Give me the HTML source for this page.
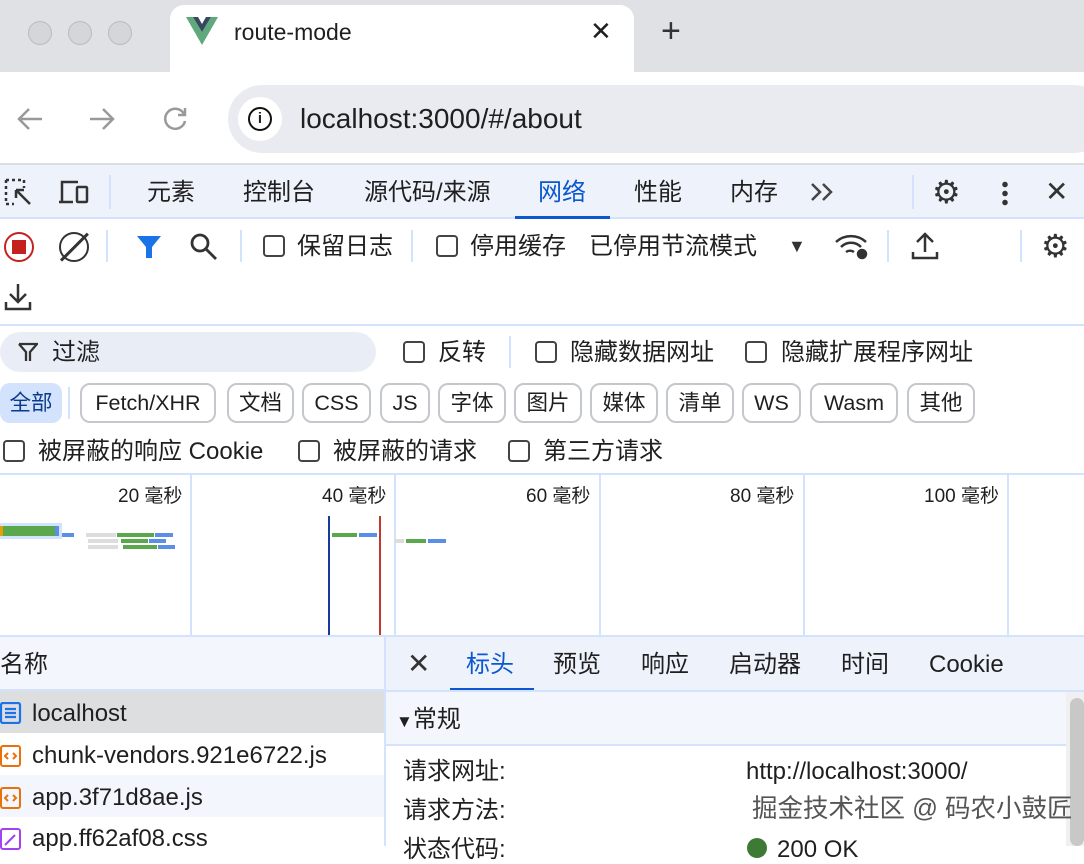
<!DOCTYPE html>
<html><head><meta charset="utf-8"><style>
*{margin:0;padding:0;box-sizing:border-box}
body{width:1084px;height:846px;overflow:hidden;position:relative;background:#fff;font-family:"Liberation Sans","Noto Sans CJK SC",sans-serif;color:#1f1f1f}
.a{position:absolute;white-space:nowrap}
.t{font-size:24px;line-height:28px}
.cb{position:absolute;width:22px;height:22px;border:2px solid #444;border-radius:4px;background:#fff}
.chip{position:absolute;top:383px;height:40px;border:2px solid #c4c7cc;border-radius:10px;font-size:21.5px;line-height:36px;text-align:center;color:#1f1f1f}
.vl{position:absolute;width:2px;background:#d3e3fd}
.tl{font-size:19px;line-height:22px}
</style></head><body>
<!-- tab strip -->
<div class="a" style="left:0;top:0;width:1084px;height:72px;background:#dfe1e5"></div>
<div class="a" style="left:28px;top:21px;width:24px;height:24px;border-radius:50%;background:#d5d6d8;border:1px solid #bbb"></div>
<div class="a" style="left:68px;top:21px;width:24px;height:24px;border-radius:50%;background:#d5d6d8;border:1px solid #bbb"></div>
<div class="a" style="left:108px;top:21px;width:24px;height:24px;border-radius:50%;background:#d5d6d8;border:1px solid #bbb"></div>
<div class="a" style="left:170px;top:5px;width:464px;height:72px;background:#fff;border-radius:14px 14px 0 0"></div>
<svg class="a" style="left:186px;top:17px" width="32" height="28" viewBox="0 0 32 28"><path d="M0 0h7l9 15 9-15h7L16 28z" fill="#5fa97c"/><path d="M7 0h5l4 7 4-7h5L16 15z" fill="#34495e"/></svg>
<div class="a" style="left:234px;top:17px;font-size:23px;line-height:30px">route-mode</div>
<div class="a" style="left:590px;top:16px;font-size:26px;line-height:30px">✕</div>
<div class="a" style="left:661px;top:12px;font-size:34px;line-height:38px;color:#333">+</div>
<!-- toolbar -->
<div class="a" style="left:0;top:72px;width:1084px;height:92px;background:#fff"></div>
<svg class="a" style="left:16px;top:106px" width="28" height="26" viewBox="0 0 28 26" fill="none" stroke="#999" stroke-width="2.5"><path d="M26 13H3M13 3L3 13l10 10"/></svg>
<svg class="a" style="left:88px;top:106px" width="28" height="26" viewBox="0 0 28 26" fill="none" stroke="#999" stroke-width="2.5"><path d="M2 13h23M15 3l10 10-10 10"/></svg>
<svg class="a" style="left:161px;top:105px" width="28" height="28" viewBox="0 0 28 28" fill="none" stroke="#999" stroke-width="2.5"><path d="M23 9A10 10 0 1 0 24 16"/><path d="M24 3v7h-7" /></svg>
<div class="a" style="left:228px;top:85px;width:880px;height:68px;background:#e9ebf0;border-radius:34px"></div>
<div class="a" style="left:238px;top:97px;width:44px;height:44px;border-radius:50%;background:#fff"></div>
<div class="a" style="left:248px;top:107px;width:24px;height:24px;border-radius:50%;border:2.5px solid #111;font-size:15px;line-height:19px;text-align:center;font-weight:bold">i</div>
<div class="a" style="left:300px;top:102px;font-size:28px;line-height:34px">localhost:3000/#/about</div>
<div class="a" style="left:0;top:163px;width:1084px;height:2px;background:#ddd"></div>
<!-- devtools tabs -->
<div class="a" style="left:0;top:165px;width:1084px;height:53px;background:#eef2fb"></div>
<div class="a" style="left:0;top:217px;width:1084px;height:2px;background:#d3e3fd"></div>
<svg class="a" style="left:4px;top:178px" width="30" height="30" viewBox="0 0 30 30" fill="none" stroke="#333" stroke-width="2.5"><path d="M2 2h18M2 2v24M2 26h8M20 2v8" stroke-dasharray="3 3"/><path d="M12 12l14 14M12 12h8M12 12v8"/></svg>
<svg class="a" style="left:58px;top:179px" width="32" height="26" viewBox="0 0 32 26" fill="none" stroke="#333" stroke-width="2.5"><path d="M4 22V3h16M1 23h14"/><rect x="19" y="8" width="10" height="15" rx="1"/></svg>
<div class="vl" style="left:109px;top:175px;height:34px"></div>
<div class="a t" style="left:147px;top:179px">元素</div>
<div class="a t" style="left:243px;top:179px">控制台</div>
<div class="a t" style="left:364px;top:179px">源代码/来源</div>
<div class="a t" style="left:538px;top:179px;color:#0b57d0">网络</div>
<div class="a" style="left:515px;top:216px;width:95px;height:3px;background:#0b57d0"></div>
<div class="a t" style="left:634px;top:179px">性能</div>
<div class="a t" style="left:730px;top:179px">内存</div>
<svg class="a" style="left:810px;top:182px" width="26" height="20" viewBox="0 0 26 20" fill="none" stroke="#444" stroke-width="2.5"><path d="M2 2l8 8-8 8M13 2l8 8-8 8"/></svg>
<div class="vl" style="left:912px;top:175px;height:34px"></div>
<div class="a" style="left:932px;top:174px;font-size:32px;line-height:36px;color:#333">⚙</div>
<div class="a" style="left:1002px;top:180px;width:6px;height:26px;background:radial-gradient(circle,#333 2.5px,transparent 3px) 0 0/6px 9px"></div>
<div class="a" style="left:1045px;top:176px;font-size:28px;line-height:32px;color:#333">✕</div>
<!-- network toolbar -->
<div class="a" style="left:4px;top:232px;width:30px;height:30px;border-radius:50%;border:2.5px solid #c5221f"></div>
<div class="a" style="left:12px;top:240px;width:14px;height:14px;background:#c5221f"></div>
<div class="a" style="left:59px;top:232px;width:30px;height:30px;border-radius:50%;border:2.5px solid #333"></div>
<div class="a" style="left:73px;top:228px;width:2.5px;height:38px;background:#333;transform:rotate(45deg)"></div>
<div class="vl" style="left:106px;top:230px;height:32px"></div>
<svg class="a" style="left:136px;top:234px" width="26" height="26" viewBox="0 0 26 26"><path d="M1 2h24L16 13v11h-6V13z" fill="#1a73e8"/></svg>
<svg class="a" style="left:189px;top:232px" width="30" height="30" viewBox="0 0 30 30" fill="none" stroke="#333" stroke-width="2.8"><circle cx="11" cy="11" r="8"/><path d="M17 17l10 10"/></svg>
<div class="vl" style="left:240px;top:230px;height:32px"></div>
<div class="cb" style="left:263px;top:235px"></div>
<div class="a t" style="left:297px;top:233px">保留日志</div>
<div class="vl" style="left:411px;top:230px;height:32px"></div>
<div class="cb" style="left:436px;top:235px"></div>
<div class="a t" style="left:470px;top:233px">停用缓存</div>
<div class="a t" style="left:589px;top:233px">已停用节流模式</div>
<div class="a" style="left:788px;top:236px;font-size:18px;color:#333">▼</div>
<svg class="a" style="left:834px;top:232px" width="36" height="28" viewBox="0 0 36 28" fill="none" stroke="#333" stroke-width="2.5"><path d="M2 10a22 22 0 0 1 30 0M7 15a14 14 0 0 1 20 0M12 20a7 7 0 0 1 8 0"/><circle cx="28" cy="22" r="4" fill="#333"/></svg>
<div class="vl" style="left:887px;top:230px;height:32px"></div>
<svg class="a" style="left:911px;top:232px" width="28" height="28" viewBox="0 0 28 28" fill="none" stroke="#333" stroke-width="2.5"><path d="M14 20V3M6 10l8-8 8 8M2 20v6h24v-6"/></svg>
<div class="vl" style="left:1020px;top:230px;height:32px"></div>
<div class="a" style="left:1041px;top:228px;font-size:32px;line-height:36px;color:#333">⚙</div>
<svg class="a" style="left:4px;top:282px" width="28" height="30" viewBox="0 0 28 30" fill="none" stroke="#333" stroke-width="2.5"><path d="M14 2v18M6 12l8 8 8-8M2 20v7h24v-7"/></svg>
<div class="a" style="left:0;top:324px;width:1084px;height:2px;background:#d3e3fd"></div>
<!-- filter row -->
<div class="a" style="left:0;top:332px;width:376px;height:40px;background:#e9eef6;border-radius:20px"></div>
<svg class="a" style="left:18px;top:342px" width="20" height="20" viewBox="0 0 20 20" fill="none" stroke="#333" stroke-width="2.3"><path d="M1 2h18l-7 8v9M8 19v-9L1 2"/></svg>
<div class="a t" style="left:52px;top:339px">过滤</div>
<div class="cb" style="left:403px;top:341px"></div>
<div class="a t" style="left:438px;top:339px">反转</div>
<div class="vl" style="left:509px;top:336px;height:32px"></div>
<div class="cb" style="left:535px;top:341px"></div>
<div class="a t" style="left:570px;top:339px">隐藏数据网址</div>
<div class="cb" style="left:745px;top:341px"></div>
<div class="a t" style="left:781px;top:339px">隐藏扩展程序网址</div>
<!-- chips -->
<div class="a" style="left:0;top:383px;width:62px;height:40px;background:#d3e3fd;border-radius:10px;font-size:21.5px;line-height:40px;text-align:center;color:#0b3a8c">全部</div>
<div class="vl" style="left:68px;top:387px;height:32px"></div>
<div class="chip" style="left:80px;width:136px">Fetch/XHR</div>
<div class="chip" style="left:227px;width:67px">文档</div>
<div class="chip" style="left:302px;width:69px">CSS</div>
<div class="chip" style="left:380px;width:50px">JS</div>
<div class="chip" style="left:438px;width:68px">字体</div>
<div class="chip" style="left:514px;width:68px">图片</div>
<div class="chip" style="left:590px;width:68px">媒体</div>
<div class="chip" style="left:666px;width:68px">清单</div>
<div class="chip" style="left:742px;width:59px">WS</div>
<div class="chip" style="left:810px;width:88px">Wasm</div>
<div class="chip" style="left:907px;width:68px">其他</div>
<div class="cb" style="left:3px;top:440px"></div>
<div class="a t" style="left:38px;top:438px">被屏蔽的响应 Cookie</div>
<div class="cb" style="left:298px;top:440px"></div>
<div class="a t" style="left:333px;top:438px">被屏蔽的请求</div>
<div class="cb" style="left:508px;top:440px"></div>
<div class="a t" style="left:543px;top:438px">第三方请求</div>
<div class="a" style="left:0;top:473px;width:1084px;height:2px;background:#d3e3fd"></div>
<!-- timeline -->
<div class="vl" style="left:190px;top:475px;height:161px"></div>
<div class="vl" style="left:394px;top:475px;height:161px"></div>
<div class="vl" style="left:599px;top:475px;height:161px"></div>
<div class="vl" style="left:803px;top:475px;height:161px"></div>
<div class="vl" style="left:1007px;top:475px;height:161px"></div>
<div class="a tl" style="left:118px;top:486px">20 毫秒</div>
<div class="a tl" style="left:322px;top:486px">40 毫秒</div>
<div class="a tl" style="left:526px;top:486px">60 毫秒</div>
<div class="a tl" style="left:730px;top:486px">80 毫秒</div>
<div class="a tl" style="left:924px;top:486px">100 毫秒</div>
<div class="a" style="left:0;top:523px;width:62px;height:16px;background:#d3e3fd"></div>
<div class="a" style="left:0;top:526px;width:3px;height:10px;background:#e3a008"></div>
<div class="a" style="left:3px;top:526px;width:52px;height:10px;background:#5ba84c"></div>
<div class="a" style="left:55px;top:526px;width:4px;height:10px;background:#5b8ee6"></div>
<div class="a" style="left:62px;top:533px;width:12px;height:4px;background:#5b8ee6"></div>
<div class="a" style="left:86px;top:533px;width:30px;height:4px;background:#ddd"></div>
<div class="a" style="left:117px;top:533px;width:37px;height:4px;background:#5ba84c"></div>
<div class="a" style="left:155px;top:533px;width:18px;height:4px;background:#5b8ee6"></div>
<div class="a" style="left:88px;top:539px;width:30px;height:4px;background:#ddd"></div>
<div class="a" style="left:121px;top:539px;width:27px;height:4px;background:#5ba84c"></div>
<div class="a" style="left:149px;top:539px;width:17px;height:4px;background:#5b8ee6"></div>
<div class="a" style="left:88px;top:545px;width:30px;height:4px;background:#ddd"></div>
<div class="a" style="left:123px;top:545px;width:34px;height:4px;background:#5ba84c"></div>
<div class="a" style="left:158px;top:545px;width:17px;height:4px;background:#5b8ee6"></div>
<div class="a" style="left:328px;top:516px;width:2px;height:120px;background:#1a3a9a"></div>
<div class="a" style="left:379px;top:516px;width:2px;height:120px;background:#c0392b"></div>
<div class="a" style="left:332px;top:533px;width:25px;height:4px;background:#5ba84c"></div>
<div class="a" style="left:359px;top:533px;width:18px;height:4px;background:#5b8ee6"></div>
<div class="a" style="left:394px;top:539px;width:10px;height:4px;background:#ddd"></div>
<div class="a" style="left:406px;top:539px;width:20px;height:4px;background:#5ba84c"></div>
<div class="a" style="left:428px;top:539px;width:18px;height:4px;background:#5b8ee6"></div>
<div class="a" style="left:0;top:635px;width:1084px;height:2px;background:#d3e3fd"></div>
<!-- left list -->
<div class="a" style="left:0;top:637px;width:384px;height:53px;background:#f3f6fc"></div>
<div class="a t" style="left:0;top:651px">名称</div>
<div class="a" style="left:0;top:689px;width:384px;height:2px;background:#d3e3fd"></div>
<div class="a" style="left:0;top:691px;width:384px;height:42px;background:#dcdedf"></div>
<div class="a" style="left:0;top:775px;width:384px;height:42px;background:#f3f6fc"></div>
<svg class="a" style="left:0;top:702px" width="22" height="22" viewBox="0 0 22 22" fill="none" stroke="#1a73e8" stroke-width="2.2"><rect x="1" y="1" width="19" height="20" rx="2"/><path d="M5 7h11M5 11h11M5 15h11"/></svg>
<div class="a t" style="left:32px;top:700px">localhost</div>
<svg class="a" style="left:0;top:745px" width="22" height="22" viewBox="0 0 22 22" fill="none" stroke="#e8710a" stroke-width="2"><rect x="1" y="1" width="19" height="20" rx="2"/><path d="M8 8l-3 3 3 3M13 8l3 3-3 3"/></svg>
<div class="a t" style="left:32px;top:742px">chunk-vendors.921e6722.js</div>
<svg class="a" style="left:0;top:787px" width="22" height="22" viewBox="0 0 22 22" fill="none" stroke="#e8710a" stroke-width="2"><rect x="1" y="1" width="19" height="20" rx="2"/><path d="M8 8l-3 3 3 3M13 8l3 3-3 3"/></svg>
<div class="a t" style="left:32px;top:784px">app.3f71d8ae.js</div>
<svg class="a" style="left:0;top:828px" width="22" height="22" viewBox="0 0 22 22" fill="none" stroke="#a142f4" stroke-width="2"><rect x="1" y="1" width="19" height="20" rx="2"/><path d="M5 17l10-10"/></svg>
<div class="a t" style="left:32px;top:825px">app.ff62af08.css</div>
<div class="a" style="left:384px;top:637px;width:2px;height:209px;background:#d3e3fd"></div>
<!-- right panel -->
<div class="a" style="left:386px;top:637px;width:698px;height:53px;background:#eef2fb"></div>
<div class="a" style="left:407px;top:647px;font-size:28px;line-height:34px;color:#333">✕</div>
<div class="a t" style="left:466px;top:651px;color:#0b57d0">标头</div>
<div class="a" style="left:450px;top:688px;width:84px;height:3px;background:#0b57d0"></div>
<div class="a t" style="left:553px;top:651px">预览</div>
<div class="a t" style="left:641px;top:651px">响应</div>
<div class="a t" style="left:729px;top:651px">启动器</div>
<div class="a t" style="left:841px;top:651px">时间</div>
<div class="a t" style="left:929px;top:651px">Cookie</div>
<div class="a" style="left:386px;top:690px;width:698px;height:2px;background:#d3e3fd"></div>
<div class="a" style="left:386px;top:692px;width:680px;height:52px;background:#f3f6fc"></div>
<div class="a" style="left:386px;top:744px;width:680px;height:2px;background:#d3e3fd"></div>
<div class="a t" style="left:396px;top:706px"><span style="font-size:17px">▼</span>常规</div>
<div class="a" style="left:1066px;top:692px;width:18px;height:154px;background:#f0f0f0"></div>
<div class="a" style="left:1070px;top:698px;width:14px;height:148px;background:#c8c8c8;border-radius:7px"></div>
<div class="a t" style="left:403px;top:758px">请求网址:</div>
<div class="a t" style="left:746px;top:758px">http://localhost:3000/</div>
<div class="a t" style="left:403px;top:797px">请求方法:</div>
<div class="a t" style="left:752px;top:795px;color:#555;font-size:25.5px">掘金技术社区 @ 码农小鼓匠</div>
<div class="a t" style="left:403px;top:836px">状态代码:</div>
<div class="a" style="left:747px;top:838px;width:20px;height:20px;border-radius:50%;background:#3c7a35"></div>
<div class="a t" style="left:777px;top:836px">200 OK</div>
</body></html>
